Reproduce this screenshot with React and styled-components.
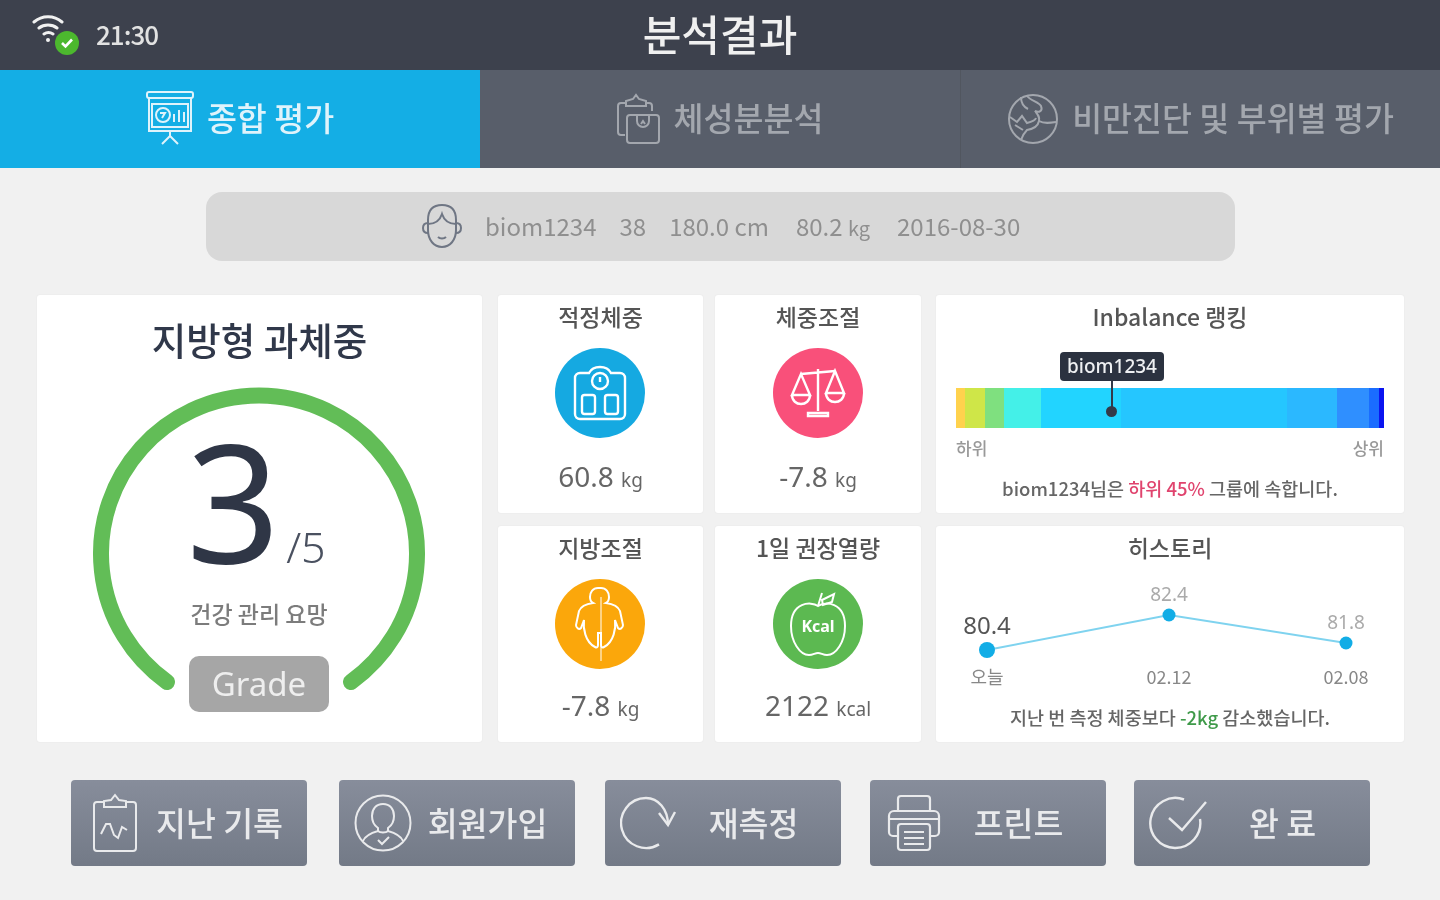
import React from 'react';
import styled, { createGlobalStyle } from 'styled-components';

const SEGMENTS = [
  ['#ffd24d', 9],
  ['#cfe648', 20],
  ['#7fe07f', 19],
  ['#44f0e8', 37],
  ['#22d4ff', 80],
  ['#25c6ff', 166],
  ['#2bb8ff', 50],
  ['#2f8fff', 32],
  ['#1a6cff', 10],
  ['#0a14f0', 5],
];

const HISTORY = [
  { x: 51, y: 98, r: 8, value: '80.4', label: '오늘', main: true },
  { x: 233, y: 63, r: 6.5, value: '82.4', label: '02.12' },
  { x: 410, y: 91, r: 6.5, value: '81.8', label: '02.08' },
];

const PresentationIcon = () => (
  <svg width="48" height="56" viewBox="0 0 48 56" fill="none" stroke="currentColor" strokeWidth="2">
    <rect x="1" y="1" width="46" height="6" rx="2" />
    <path d="M3 7v33h42V7" />
    <rect x="6" y="13" width="36" height="23" />
    <circle cx="17" cy="24" r="7" />
    <path d="M14 22h5l-3 5M28 31v-8M33 31V19M38 31v-10" />
    <path d="M24 40v5M24 45l-8 8M24 45l8 8" />
  </svg>
);

const ClipBagIcon = () => (
  <svg width="44" height="52" viewBox="0 0 44 52" fill="none" stroke="currentColor" strokeWidth="2">
    <path d="M9 10H4a3 3 0 0 0-3 3v26a3 3 0 0 0 3 3h4" />
    <path d="M9 13V8l7-2 3-4 3 4 7 2v5z" />
    <path d="M29 10h3a3 3 0 0 1 3 3v5" />
    <rect x="10" y="22" width="32" height="28" rx="3" />
    <path d="M20 22v6a6 6 0 0 0 12 0v-6" />
    <path d="M24 31l2-3 2 3" />
  </svg>
);

const ArmGlobeIcon = () => (
  <svg width="52" height="52" viewBox="0 0 52 52" fill="none" stroke="currentColor" strokeWidth="2">
    <circle cx="26" cy="26" r="24" />
    <path d="M20 3c4 5 12 6 14 10 2 5-2 7-6 5 3 4 5 6 4 10-1 5-6 8-12 9-3 3-5 7-6 10" />
    <path d="M3 24l7 5 5-6 5 7c4-1 8-2 9-5M14 4c0 6 3 10 7 12M16 37l-8-5M32 28c5 3 11 2 17 1" />
  </svg>
);

const FaceIcon = () => (
  <svg width="40" height="46" viewBox="0 0 40 46" fill="none" stroke="#6f7684" strokeWidth="2">
    <path d="M6 17C6 7 11 2 20 2s14 5 14 15v10c0 10-6 17-14 17S6 37 6 27z" />
    <path d="M6 21c7 0 12-4 14-10 2 6 7 10 14 10" />
    <path d="M6 20c-3 0-5 2-5 5s2 5 5 5M34 20c3 0 5 2 5 5s-2 5-5 5" />
    <path d="M16 34c2 2 6 2 8 0" />
  </svg>
);

const ScaleIcon = () => (
  <svg width="54" height="56" viewBox="0 0 54 56" fill="none" stroke="#fff" strokeWidth="2.4">
    <path d="M7 8h9c2-4 6-6 11-6s9 2 11 6h9a5 5 0 0 1 5 5v36a5 5 0 0 1-5 5H7a5 5 0 0 1-5-5V13a5 5 0 0 1 5-5z" />
    <circle cx="27" cy="16" r="8" />
    <path d="M27 12v5" />
    <rect x="9" y="30" width="13" height="19" rx="2.5" />
    <rect x="32" y="30" width="13" height="19" rx="2.5" />
  </svg>
);

const BalanceIcon = () => (
  <svg width="56" height="52" viewBox="0 0 56 52" fill="none" stroke="#fff" strokeWidth="2.4">
    <path d="M28 2v42M18 46h20v3H18zM11 7l34-3" />
    <path d="M11 7L2 28h18zM45 4l-9 22h18z" />
    <path d="M2 28c0 12 18 12 18 0M36 26c0 12 18 12 18 0" />
  </svg>
);

const BodyIcon = () => (
  <svg width="50" height="74" viewBox="0 0 50 74" fill="none" stroke="#fff" strokeWidth="2">
    <path d="M25 1c5 0 8 4 8 9 0 3-1 5-3 6 7 1 12 3 14 8l3 14c0 3-3 5-5 3l-3-8c1 8-1 22-11 27-2 1-3 0-3-2V46h-3v12c0 2-1 3-3 2C9 55 7 41 8 33l-3 8c-2 2-5 0-5-3l3-14c2-5 7-7 14-8-2-1-3-3-3-6 0-5 3-9 8-9z" transform="translate(1 0)" />
    <path d="M26 10v64" strokeWidth="1" />
  </svg>
);

const AppleIcon = () => (
  <svg width="58" height="66" viewBox="0 0 58 66" fill="none" stroke="#fff" strokeWidth="2">
    <path d="M29 15c-7-5-27-4-27 20 0 16 9 29 18 29 4 0 6-2 9-2s5 2 9 2c9 0 18-13 18-29 0-24-20-25-27-20z" />
    <path d="M29 15l4-13M33 9l12-6-2 8-9 3z" />
    <text x="29" y="41" textAnchor="middle" fill="#fff" stroke="none" fontSize="16" fontWeight="700" fontFamily="'Noto Sans', sans-serif">Kcal</text>
  </svg>
);

const HistoryIcon = () => (
  <svg width="46" height="60" viewBox="0 0 46 60" fill="none" stroke="currentColor" strokeWidth="2">
    <path d="M12 9H5a3 3 0 0 0-3 3v43a3 3 0 0 0 3 3h36a3 3 0 0 0 3-3V12a3 3 0 0 0-3-3h-7" />
    <path d="M12 14V8l7-1 4-5 4 5 7 1v6z" />
    <path d="M9 41l5-10 4 0 4 11 4 3 4-11 5 3" />
  </svg>
);

const MemberIcon = () => (
  <svg width="58" height="58" viewBox="0 0 58 58" fill="none" stroke="currentColor" strokeWidth="2">
    <circle cx="29" cy="29" r="27.5" />
    <path d="M29 10c-7 0-11 5-11 12 0 6 3 10 6 12v3c-7 2-13 5-15 10M29 10c7 0 11 5 11 12 0 6-3 10-6 12v3c7 2 13 5 15 10" />
    <path d="M24 37c2 2 8 2 10 0M24 46l4 4 7-7" />
  </svg>
);

const RetryIcon = () => (
  <svg width="58" height="56" viewBox="0 0 58 56" fill="none" stroke="currentColor" strokeWidth="2.4">
    <path d="M39 49.4A25 25 0 1 1 26 3C38 3 48 14 48 30" />
    <path d="M39 18l9 12 7-13" />
  </svg>
);

const PrinterIcon = () => (
  <svg width="54" height="58" viewBox="0 0 54 58" fill="none" stroke="currentColor" strokeWidth="2.2">
    <path d="M11 17V5a3 3 0 0 1 3-3h26a3 3 0 0 1 3 3v12" />
    <path d="M11 42H6a4 4 0 0 1-4-4V22a5 5 0 0 1 5-5h40a5 5 0 0 1 5 5v16a4 4 0 0 1-4 4h-5" />
    <rect x="11" y="30" width="32" height="26" rx="3" />
    <path d="M17 38h20M17 44h20M17 50h20M2 25h50" />
  </svg>
);

const DoneIcon = () => (
  <svg width="58" height="56" viewBox="0 0 58 56" fill="none" stroke="currentColor" strokeWidth="2.4">
    <path d="M35 4.5A25 25 0 1 0 51 24" />
    <path d="M20 23l13 12L57 7" />
  </svg>
);

const Wifi = () => (
  <svg width="34" height="32" viewBox="0 0 34 32" fill="none" stroke="#f1f1f1" strokeWidth="3" strokeLinecap="round">
    <path d="M2 8c8-7 20-7 28 0M7 14c5-4 13-4 18 0M12 20c3-2 6-2 9 0" />
    <circle cx="16" cy="26" r="2" fill="#f1f1f1" stroke="none" />
  </svg>
);

const ACTIONS = [
  { icon: <HistoryIcon />, label: '지난 기록', before: 0 },
  { icon: <MemberIcon />, label: '회원가입', before: 32 },
  { icon: <RetryIcon />, label: '재측정', before: 30 },
  { icon: <PrinterIcon />, label: '프린트', before: 29 },
  { icon: <DoneIcon />, label: '완 료', before: 28 },
];

const App = () => (
  <Page>
    <GlobalStyle />
    <Header>
      <Status>
        <WifiBox>
          <Wifi />
          <WifiBadge>
            <svg width="14" height="12" viewBox="0 0 14 12" fill="none" stroke="#fff" strokeWidth="2.6">
              <path d="M2 6l3.5 3.5L12 2.5" />
            </svg>
          </WifiBadge>
        </WifiBox>
        <Clock>21:30</Clock>
      </Status>
      <Title>분석결과</Title>
    </Header>

    <Tabs>
      <Tab $active>
        <PresentationIcon />
        <TabLabel>종합 평가</TabLabel>
      </Tab>
      <Tab>
        <ClipBagIcon />
        <TabLabel>체성분분석</TabLabel>
      </Tab>
      <Tab $divided>
        <ArmGlobeIcon />
        <TabLabel>비만진단 및 부위별 평가</TabLabel>
      </Tab>
    </Tabs>

    <InfoBar>
      <FaceIcon />
      <InfoText>biom1234</InfoText>
      <InfoText>38</InfoText>
      <InfoText>180.0 cm</InfoText>
      <InfoText $wide>
        80.2 <small>kg</small>
      </InfoText>
      <InfoText $wide>2016-08-30</InfoText>
    </InfoBar>

    <Board>
      <GradeCard>
        <GradeTitle>지방형 과체중</GradeTitle>
        <Gauge>
          <GaugeArc viewBox="0 0 332 310" fill="none">
            <path d="M74 294A158 158 0 1 1 258 294" stroke="#62bd57" strokeWidth="16" strokeLinecap="round" />
          </GaugeArc>
          <Score>
            <ScoreMain>3</ScoreMain>
            <ScoreMax>/5</ScoreMax>
          </Score>
          <Advice>건강 관리 요망</Advice>
          <GradeBadge>Grade</GradeBadge>
        </Gauge>
      </GradeCard>

      <MiniGrid>
        <MiniCard>
          <CardTitle>적정체중</CardTitle>
          <Disc $color="#15a9e1"><ScaleIcon /></Disc>
          <Amount>60.8 <small>kg</small></Amount>
        </MiniCard>
        <MiniCard>
          <CardTitle>체중조절</CardTitle>
          <Disc $color="#f9507a"><BalanceIcon /></Disc>
          <Amount>-7.8 <small>kg</small></Amount>
        </MiniCard>
        <MiniCard $lower>
          <CardTitle>지방조절</CardTitle>
          <Disc $color="#fba70b"><BodyIcon /></Disc>
          <Amount>-7.8 <small>kg</small></Amount>
        </MiniCard>
        <MiniCard $lower>
          <CardTitle>1일 권장열량</CardTitle>
          <Disc $color="#5cb951"><AppleIcon /></Disc>
          <Amount>2122 <small>kcal</small></Amount>
        </MiniCard>
      </MiniGrid>

      <SideColumn>
        <RankCard>
          <CardTitle>Inbalance 랭킹</CardTitle>
          <RankBar>
            {SEGMENTS.map(([color, width]) => (
              <Segment key={color} $color={color} style={{ flexGrow: width }} />
            ))}
            <Marker>
              <MarkerTip>biom1234</MarkerTip>
            </Marker>
          </RankBar>
          <RankLegend>
            <span>하위</span>
            <span>상위</span>
          </RankLegend>
          <Note $top={15}>
            biom1234님은 <Pink>하위 45%</Pink> 그룹에 속합니다.
          </Note>
        </RankCard>
        <HistoryCard>
          <CardTitle>히스토리</CardTitle>
          <Chart viewBox="0 0 468 152" width="468" height="152">
            <polyline points={HISTORY.map(p => `${p.x},${p.y}`).join(' ')} fill="none" stroke="#7fd3ef" strokeWidth="2" />
            {HISTORY.map(p => (
              <g key={p.label}>
                <circle cx={p.x} cy={p.y} r={p.r} fill="#12ade6" />
                <ChartValue x={p.x} y={p.y - (p.main ? 16 : 14)} $main={p.main}>{p.value}</ChartValue>
                <ChartLabel x={p.x} y={132}>{p.label}</ChartLabel>
              </g>
            ))}
          </Chart>
          <Note>
            지난 번 측정 체중보다 <Green>-2kg</Green> 감소했습니다.
          </Note>
        </HistoryCard>
      </SideColumn>
    </Board>

    <Actions>
      {ACTIONS.map(a => (
        <Action key={a.label} $before={a.before}>
          <ActionIcon>{a.icon}</ActionIcon>
          <ActionLabel>{a.label}</ActionLabel>
        </Action>
      ))}
    </Actions>
  </Page>
);

export default App;

const GlobalStyle = createGlobalStyle`
  html, body {
    margin: 0;
    padding: 0;
    background: #f1f1f1;
  }
  * {
    box-sizing: border-box;
  }
`;

const Page = styled.div`
  width: 1440px;
  height: 900px;
  overflow: hidden;
  background: #f1f1f1;
  font-family: 'Noto Sans CJK KR', 'Noto Sans', sans-serif;
  filter: blur(0.7px);
`;

const Header = styled.header`
  position: relative;
  height: 70px;
  background: #3d414d;
  display: flex;
  align-items: center;
  justify-content: center;
`;

const Status = styled.div`
  position: absolute;
  left: 32px;
  top: 14px;
  display: flex;
  align-items: flex-start;
  gap: 16px;
`;

const WifiBox = styled.div`
  position: relative;
  width: 48px;
  height: 42px;
`;

const WifiBadge = styled.span`
  position: absolute;
  left: 23px;
  top: 17px;
  width: 24px;
  height: 24px;
  border-radius: 50%;
  background: #4cb82e;
  display: flex;
  align-items: center;
  justify-content: center;
`;

const Clock = styled.span`
  font-size: 26px;
  line-height: 40px;
  font-weight: 500;
  color: #e2e2e2;
  letter-spacing: -1px;
`;

const Title = styled.h1`
  margin: 0 0 4px;
  font-size: 42px;
  font-weight: 500;
  line-height: 66px;
  color: #f0f0f0;
`;

const Tabs = styled.nav`
  display: grid;
  grid-template-columns: 480px 480px 480px;
  height: 98px;
`;

const Tab = styled.div`
  display: flex;
  align-items: center;
  justify-content: center;
  gap: 13px;
  font-size: 32.6px;
  font-weight: 500;
  white-space: nowrap;
  color: ${p => (p.$active ? '#dff3fb' : '#a3a7ae')};
  background: ${p => (p.$active ? '#14aee5' : '#585e6a')};
  border-left: ${p => (p.$divided ? '1px solid #51565f' : 'none')};
`;

const TabLabel = styled.span`
  margin-bottom: 5px;
`;

const InfoBar = styled.div`
  width: 1029px;
  height: 69px;
  margin: 24px 0 0 206px;
  padding: 0 0 2px 216px;
  display: flex;
  align-items: center;
  gap: 23px;
  border-radius: 16px;
  background: #d8d8d8;
`;

const InfoText = styled.span`
  font-size: 24px;
  font-weight: 400;
  white-space: nowrap;
  color: #8f8f8f;
  margin-left: ${p => (p.$wide ? '4px' : '0')};
  small {
    font-size: 20px;
  }
`;

const Board = styled.div`
  display: flex;
  gap: 16px;
  margin-top: 34px;
  padding-left: 37px;
  height: 447px;
`;

const Card = styled.section`
  background: #fff;
  border-radius: 3px;
  box-shadow: 0 0 2px rgba(0, 0, 0, 0.06);
`;

const GradeCard = styled(Card)`
  width: 445px;
  display: flex;
  flex-direction: column;
  align-items: center;
`;

const GradeTitle = styled.h2`
  margin: 17px 0 2px;
  font-size: 37.5px;
  font-weight: 500;
  line-height: 54px;
  color: #30384a;
`;

const Gauge = styled.div`
  position: relative;
  width: 332px;
  height: 310px;
  margin: 20px 1px 0 0;
  display: flex;
  flex-direction: column;
  align-items: center;
`;

const GaugeArc = styled.svg`
  position: absolute;
  left: 0;
  top: 0;
  width: 332px;
  height: 310px;
  overflow: visible;
`;

const Score = styled.div`
  display: flex;
  align-items: baseline;
  height: 143px;
  margin: 27px 0 0 -6px;
  font-family: 'Noto Sans', sans-serif;
  color: #2f3646;
`;

const ScoreMain = styled.span`
  font-size: 164px;
  font-weight: 400;
  line-height: 170px;
`;

const ScoreMax = styled.span`
  font-size: 43px;
  font-weight: 300;
  line-height: 45px;
  margin-left: 6px;
  color: #4a5160;
`;

const Advice = styled.p`
  margin: 38px 0 0;
  font-size: 23px;
  font-weight: 500;
  line-height: 34px;
  color: #7c7c7c;
`;

const GradeBadge = styled.div`
  width: 140px;
  height: 56px;
  margin-top: 26px;
  border-radius: 10px;
  background: #a6a6a6;
  color: #eee;
  font-family: 'Noto Sans', sans-serif;
  font-size: 33px;
  line-height: 56px;
  text-align: center;
`;

const MiniGrid = styled.div`
  width: 423px;
  margin-right: -1px;
  display: grid;
  grid-template-columns: 205px 206px;
  grid-template-rows: 218px 216px;
  gap: 13px 12px;
`;

const MiniCard = styled(Card)`
  display: flex;
  flex-direction: column;
  align-items: center;
  --amount-gap: ${p => (p.$lower ? '14px' : '16px')};
`;

const CardTitle = styled.h3`
  margin: 4px 0 0;
  font-size: 23px;
  font-weight: 500;
  line-height: 34px;
  color: #555;
  white-space: nowrap;
`;

const Disc = styled.div`
  width: 90px;
  height: 90px;
  margin: 15px 1px 0 0;
  border-radius: 50%;
  background: ${p => p.$color};
  display: flex;
  align-items: center;
  justify-content: center;
`;

const Amount = styled.p`
  margin: var(--amount-gap) 0 0;
  font-family: 'Noto Sans', sans-serif;
  font-size: 28px;
  line-height: 44px;
  color: #666;
  small {
    font-size: 19px;
  }
`;

const SideColumn = styled.div`
  width: 468px;
  display: grid;
  grid-template-rows: 218px 216px;
  gap: 13px;
`;

const RankCard = styled(Card)`
  position: relative;
  display: flex;
  flex-direction: column;
  align-items: center;
`;

const RankBar = styled.div`
  position: relative;
  display: flex;
  width: 428px;
  height: 40px;
  margin-top: 55px;
`;

const Segment = styled.div`
  flex: 1 1 0;
  background: ${p => p.$color};
`;

const Marker = styled.div`
  position: absolute;
  left: 150px;
  top: 18px;
  width: 11px;
  height: 11px;
  border-radius: 50%;
  background: #333a48;
  &::before {
    content: '';
    position: absolute;
    left: 4.5px;
    top: -25px;
    width: 2px;
    height: 27px;
    background: #333a48;
  }
`;

const MarkerTip = styled.div`
  position: absolute;
  left: -46px;
  top: -54px;
  width: 104px;
  height: 29px;
  border-radius: 4px;
  background: #2b3240;
  color: #eef0f2;
  font-family: 'Noto Sans', sans-serif;
  font-size: 19px;
  font-weight: 500;
  line-height: 29px;
  text-align: center;
`;

const RankLegend = styled.div`
  width: 428px;
  margin-top: 8px;
  display: flex;
  justify-content: space-between;
  font-size: 17px;
  font-weight: 500;
  line-height: 24px;
  color: #999;
`;

const Note = styled.p`
  margin: ${p => p.$top || 0}px 0 0;
  font-size: 18.5px;
  font-weight: 500;
  line-height: 26px;
  color: #666;
  white-space: nowrap;
`;

const Pink = styled.span`
  color: #e0446e;
`;

const Green = styled.span`
  color: #3f9a4a;
`;

const HistoryCard = styled(Card)`
  display: flex;
  flex-direction: column;
  align-items: center;
`;

const Chart = styled.svg`
  display: block;
  overflow: visible;
  margin-top: -12px;
`;

const ChartValue = styled.text`
  text-anchor: middle;
  font-family: 'Noto Sans', sans-serif;
  font-size: ${p => (p.$main ? '24px' : '19px')};
  fill: ${p => (p.$main ? '#555' : '#aaa')};
`;

const ChartLabel = styled.text`
  text-anchor: middle;
  font-family: 'Noto Sans CJK KR', 'Noto Sans', sans-serif;
  font-size: 18px;
  fill: #888;
`;

const Actions = styled.div`
  display: flex;
  margin-top: 38px;
  padding-left: 71px;
`;

const Action = styled.button`
  width: 236px;
  height: 86px;
  margin-left: ${p => p.$before}px;
  padding: 0 12px 0 15px;
  border: none;
  border-radius: 4px;
  background: linear-gradient(#878d9b, #737a87);
  color: #e9eaec;
  display: flex;
  align-items: center;
  font-family: inherit;
`;

const ActionIcon = styled.span`
  flex: none;
  width: 58px;
  display: flex;
  justify-content: center;
`;

const ActionLabel = styled.span`
  flex: 1;
  display: flex;
  justify-content: center;
  margin-bottom: 4px;
  font-size: 32.5px;
  font-weight: 500;
  white-space: nowrap;
`;
